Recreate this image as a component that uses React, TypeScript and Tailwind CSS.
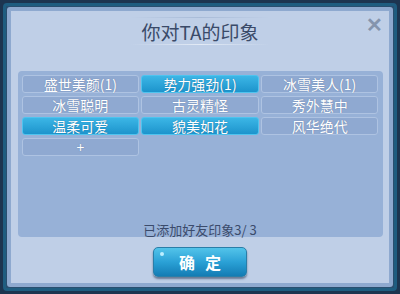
import React from 'react';

const tags = [
  { label: '盛世美颜(1)', on: false },
  { label: '势力强劲(1)', on: true },
  { label: '冰雪美人(1)', on: false },
  { label: '冰雪聪明', on: false },
  { label: '古灵精怪', on: false },
  { label: '秀外慧中', on: false },
  { label: '温柔可爱', on: true },
  { label: '貌美如花', on: true },
  { label: '风华绝代', on: false },
  { label: '+', on: false },
];

function Tag({ label, on }: { label: string; on: boolean }) {
  return (
    <div
      className={
        on
          ? 'h-[18px] rounded-[3px] border border-[#4fc3ee] bg-gradient-to-b from-[#3bb6e6] to-[#1c94cc] text-white flex items-center justify-center text-[14px] leading-none [text-shadow:0_0_1px_rgba(30,60,100,0.6)]'
          : 'h-[18px] rounded-[3px] border border-[#aec3e2] bg-[#8fa9d1] text-white flex items-center justify-center text-[14px] leading-none [text-shadow:0_0_1px_rgba(60,80,120,0.6)]'
      }
    >
      {label}
    </div>
  );
}

export default function App() {
  return (
    <div
      className="w-[400px] h-[294px] bg-[#1d3550] p-[3px]"
      style={{ fontFamily: '"Noto Sans CJK SC", "Noto Sans", sans-serif' }}
    >
      <div className="h-full rounded-[4px] border-[3px] border-[#1f5d80] bg-[#2a4f70] p-[1px]">
        <div className="h-full rounded-[3px] border-[4px] border-[#8ea9cf] bg-[#bfcfe7] flex flex-col items-center relative">
          <div className="absolute right-[6px] top-[3px] text-[#8494ad] text-[20px] font-bold leading-none">
            ✕
          </div>
          <div className="mt-[6px] w-[140px] h-[28px] flex flex-col items-center justify-between">
            <div className="w-full h-px bg-gradient-to-r from-transparent via-[#a9bcd8] to-transparent" />
            <div className="text-[19px] text-[#3a4a68] leading-none">你对TA的印象</div>
            <div className="w-full h-px bg-gradient-to-r from-transparent via-[#e2eaf5] to-transparent" />
          </div>
          <div className="mt-[26px] w-[365px] h-[166px] rounded-[4px] bg-[#97b1d7] px-[4px] pt-[4px] pb-[0px] flex flex-col">
            <div className="grid grid-cols-3 gap-x-[2px] gap-y-[3px]">
              {tags.map((t, i) => (
                <Tag key={i} label={t.label} on={t.on} />
              ))}
            </div>
            <div className="mt-auto text-center text-[13px] text-[#3b4b6b] leading-none pb-[1px]">
              已添加好友印象3/ 3
            </div>
          </div>
          <div className="mt-[10px] relative w-[94px] h-[30px] rounded-[5px] border border-[#2a7ea8] bg-gradient-to-b from-[#52c4ea] via-[#2aa1d6] to-[#137cb4] shadow-[0_2px_2px_rgba(20,40,70,0.5)] flex items-center justify-center text-white text-[16px] font-bold tracking-[10px] pl-[10px]">
            <div className="absolute left-[6px] top-[4px] w-[4px] h-[4px] rounded-full bg-[#bdefff]" />
            确定
          </div>
        </div>
      </div>
    </div>
  );
}
